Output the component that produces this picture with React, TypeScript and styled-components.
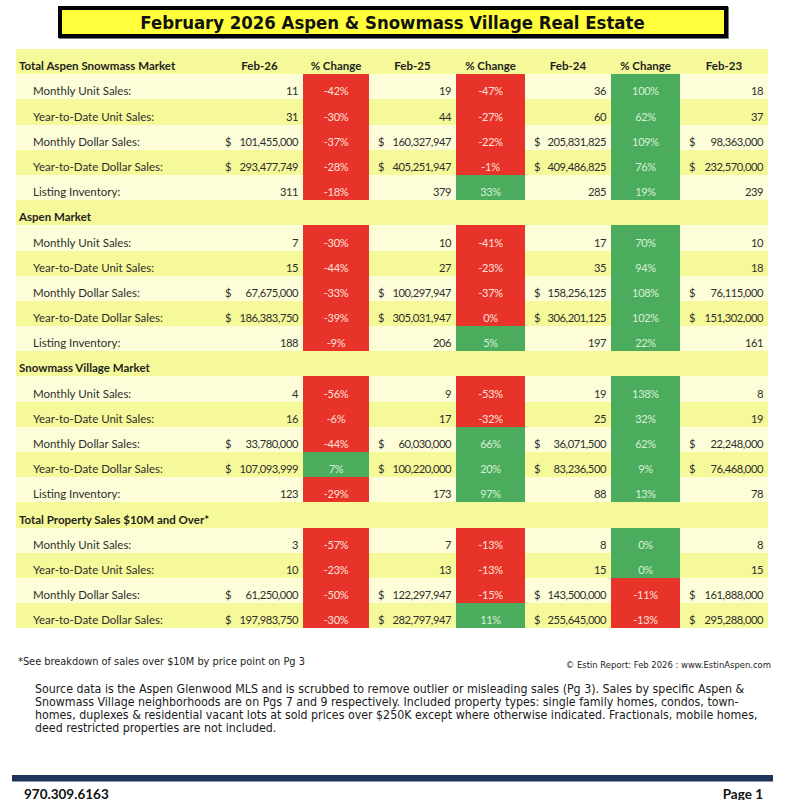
import React from "react";
import styled, { createGlobalStyle } from "styled-components";

const Global = createGlobalStyle`
  html, body { margin: 0; padding: 0; background: #ffffff; }
  body { width: 785px; height: 800px; overflow: hidden; }
`;

type Tone = "red" | "green" | undefined;
type Val = { v: string; dollar?: boolean };
type Row = { label: string; cells: [Val, string, Tone, Val, string, Tone, Val, string, Tone, Val] };

const COLS = "200px 87px 66px 87px 69px 86px 69px 88px";

const Page = styled.div`
  width: 785px;
  height: 800px;
  display: flex;
  flex-direction: column;
  align-items: stretch;
`;

const TitleWrap = styled.div`
  display: flex;
  justify-content: center;
  padding-top: 6px;
`;

const TitleBox = styled.div`
  width: 662px;
  height: 24px;
  border: 4px solid #000;
  background: #ffff3c;
  box-shadow: 1px 1px 0 #777;
  display: flex;
  align-items: center;
  justify-content: center;
  font-family: "DejaVu Sans Condensed", "DejaVu Sans", sans-serif;
  font-weight: 700;
  font-size: 18.4px;
  color: #111;
`;

const Table = styled.div`
  margin: 11px 0 0 16px;
  width: 752px;
  display: flex;
  flex-direction: column;
  font-family: Lato, "Liberation Sans", sans-serif;
  font-size: 11.5px;
  line-height: 14px;
  color: #2e2e2e;
`;

const RowGrid = styled.div<{ $band: "light" | "yellow" }>`
  display: grid;
  grid-template-columns: ${COLS};
  height: 25.2px;
  background: ${(p) => (p.$band === "light" ? "#fdfed9" : "#f6f99a")};
`;

const Cell = styled.div`
  display: flex;
  align-items: flex-end;
  padding-bottom: 1px;
`;

const SectionLabel = styled(Cell)`
  font-weight: 700;
  color: #1f1f1f;
  padding-left: 3px;
  white-space: nowrap;
`;

const HeadCell = styled(Cell)`
  font-weight: 700;
  color: #1f1f1f;
  justify-content: center;
`;

const Label = styled(Cell)`
  padding-left: 17px;
`;

const Num = styled(Cell)`
  justify-content: space-between;
  padding-left: 9px;
  padding-right: 5px;
  font-size: 11.2px;
  letter-spacing: -0.45px;
  white-space: nowrap;
`;

const Pct = styled(Cell)<{ $tone: Tone }>`
  justify-content: center;
  font-size: 11px;
  letter-spacing: -0.3px;
  background: ${(p) => (p.$tone === "red" ? "#e8332a" : p.$tone === "green" ? "#4cac5d" : "transparent")};
  color: ${(p) => (p.$tone === "red" ? "#fde2dc" : "#d9f1d9")};
`;

const Footnotes = styled.div`
  display: flex;
  justify-content: space-between;
  align-items: flex-end;
  margin: 27px 14px 0 18px;
  font-family: "DejaVu Sans Condensed", "Liberation Sans", sans-serif;
  color: #222;
`;

const Note = styled.div`
  font-size: 10.9px;
`;

const Credit = styled.div`
  font-size: 9.4px;
  margin-bottom: -2px;
`;

const Para = styled.p`
  margin: 15px 0 0 35px;
  font-family: "DejaVu Sans Condensed", "Liberation Sans", sans-serif;
  font-size: 12.3px;
  line-height: 12.8px;
  color: #1a1a1a;
  white-space: nowrap;
`;

const Spacer = styled.div`
  flex: 1;
`;

const Bar = styled.div`
  margin: 0 12px;
  height: 6px;
  background: #22335b;
  border-bottom: 1px solid #8c97ad;
`;

const Footer = styled.div`
  display: flex;
  justify-content: space-between;
  align-items: center;
  padding: 5px 22px 0 24px;
  height: 13px;
  line-height: 14px;
  font-family: Lato, "Liberation Sans", sans-serif;
  font-weight: 700;
  font-size: 13.5px;
  color: #111;
`;

const d = (v: string): Val => ({ v, dollar: true });
const n = (v: string): Val => ({ v });

const sections: { title: string; header?: boolean; rows: Row[] }[] = [
  {
    title: "Total Aspen Snowmass Market",
    header: true,
    rows: [
      { label: "Monthly Unit Sales:", cells: [n("11"), "-42%", "red", n("19"), "-47%", "red", n("36"), "100%", "green", n("18")] },
      { label: "Year-to-Date Unit Sales:", cells: [n("31"), "-30%", "red", n("44"), "-27%", "red", n("60"), "62%", "green", n("37")] },
      { label: "Monthly Dollar Sales:", cells: [d("101,455,000"), "-37%", "red", d("160,327,947"), "-22%", "red", d("205,831,825"), "109%", "green", d("98,363,000")] },
      { label: "Year-to-Date Dollar Sales:", cells: [d("293,477,749"), "-28%", "red", d("405,251,947"), "-1%", "red", d("409,486,825"), "76%", "green", d("232,570,000")] },
      { label: "Listing Inventory:", cells: [n("311"), "-18%", "red", n("379"), "33%", "green", n("285"), "19%", "green", n("239")] },
    ],
  },
  {
    title: "Aspen Market",
    rows: [
      { label: "Monthly Unit Sales:", cells: [n("7"), "-30%", "red", n("10"), "-41%", "red", n("17"), "70%", "green", n("10")] },
      { label: "Year-to-Date Unit Sales:", cells: [n("15"), "-44%", "red", n("27"), "-23%", "red", n("35"), "94%", "green", n("18")] },
      { label: "Monthly Dollar Sales:", cells: [d("67,675,000"), "-33%", "red", d("100,297,947"), "-37%", "red", d("158,256,125"), "108%", "green", d("76,115,000")] },
      { label: "Year-to-Date Dollar Sales:", cells: [d("186,383,750"), "-39%", "red", d("305,031,947"), "0%", "red", d("306,201,125"), "102%", "green", d("151,302,000")] },
      { label: "Listing Inventory:", cells: [n("188"), "-9%", "red", n("206"), "5%", "green", n("197"), "22%", "green", n("161")] },
    ],
  },
  {
    title: "Snowmass Village Market",
    rows: [
      { label: "Monthly Unit Sales:", cells: [n("4"), "-56%", "red", n("9"), "-53%", "red", n("19"), "138%", "green", n("8")] },
      { label: "Year-to-Date Unit Sales:", cells: [n("16"), "-6%", "red", n("17"), "-32%", "red", n("25"), "32%", "green", n("19")] },
      { label: "Monthly Dollar Sales:", cells: [d("33,780,000"), "-44%", "red", d("60,030,000"), "66%", "green", d("36,071,500"), "62%", "green", d("22,248,000")] },
      { label: "Year-to-Date Dollar Sales:", cells: [d("107,093,999"), "7%", "green", d("100,220,000"), "20%", "green", d("83,236,500"), "9%", "green", d("76,468,000")] },
      { label: "Listing Inventory:", cells: [n("123"), "-29%", "red", n("173"), "97%", "green", n("88"), "13%", "green", n("78")] },
    ],
  },
  {
    title: "Total Property Sales $10M and Over*",
    rows: [
      { label: "Monthly Unit Sales:", cells: [n("3"), "-57%", "red", n("7"), "-13%", "red", n("8"), "0%", "green", n("8")] },
      { label: "Year-to-Date Unit Sales:", cells: [n("10"), "-23%", "red", n("13"), "-13%", "red", n("15"), "0%", "green", n("15")] },
      { label: "Monthly Dollar Sales:", cells: [d("61,250,000"), "-50%", "red", d("122,297,947"), "-15%", "red", d("143,500,000"), "-11%", "red", d("161,888,000")] },
      { label: "Year-to-Date Dollar Sales:", cells: [d("197,983,750"), "-30%", "red", d("282,797,947"), "11%", "green", d("255,645,000"), "-13%", "red", d("295,288,000")] },
    ],
  },
];

const headers = ["Feb-26", "% Change", "Feb-25", "% Change", "Feb-24", "% Change", "Feb-23"];

const NumCell = ({ val }: { val: Val }) => (
  <Num>
    <span>{val.dollar ? "$" : ""}</span>
    <span>{val.v}</span>
  </Num>
);

export default function App() {
  return (
    <Page>
      <Global />
      <TitleWrap>
        <TitleBox>February 2026 Aspen &amp; Snowmass Village Real Estate</TitleBox>
      </TitleWrap>
      <Table>
        {sections.map((s) => (
          <React.Fragment key={s.title}>
            <RowGrid $band="yellow">
              <SectionLabel>{s.title}</SectionLabel>
              {s.header ? headers.map((h, i) => <HeadCell key={i}>{h}</HeadCell>) : null}
            </RowGrid>
            {s.rows.map((r, i) => {
              const c = r.cells;
              return (
                <RowGrid key={r.label} $band={i % 2 === 0 ? "light" : "yellow"}>
                  <Label>{r.label}</Label>
                  <NumCell val={c[0]} />
                  <Pct $tone={c[2]}>{c[1]}</Pct>
                  <NumCell val={c[3]} />
                  <Pct $tone={c[5]}>{c[4]}</Pct>
                  <NumCell val={c[6]} />
                  <Pct $tone={c[8]}>{c[7]}</Pct>
                  <NumCell val={c[9]} />
                </RowGrid>
              );
            })}
          </React.Fragment>
        ))}
      </Table>
      <Footnotes>
        <Note>*See breakdown of sales over $10M by price point on Pg 3</Note>
        <Credit>© Estin Report: Feb 2026 : www.EstinAspen.com</Credit>
      </Footnotes>
      <Para>
        Source data is the Aspen Glenwood MLS and is scrubbed to remove outlier or misleading sales (Pg 3). Sales by specific Aspen &amp;
        <br />
        Snowmass Village neighborhoods are on Pgs 7 and 9 respectively. Included property types: single family homes, condos, town-
        <br />
        homes, duplexes &amp; residential vacant lots at sold prices over $250K except where otherwise indicated. Fractionals, mobile homes,
        <br />
        deed restricted properties are not included.
      </Para>
      <Spacer />
      <Bar />
      <Footer>
        <span>970.309.6163</span>
        <span>Page 1</span>
      </Footer>
    </Page>
  );
}
